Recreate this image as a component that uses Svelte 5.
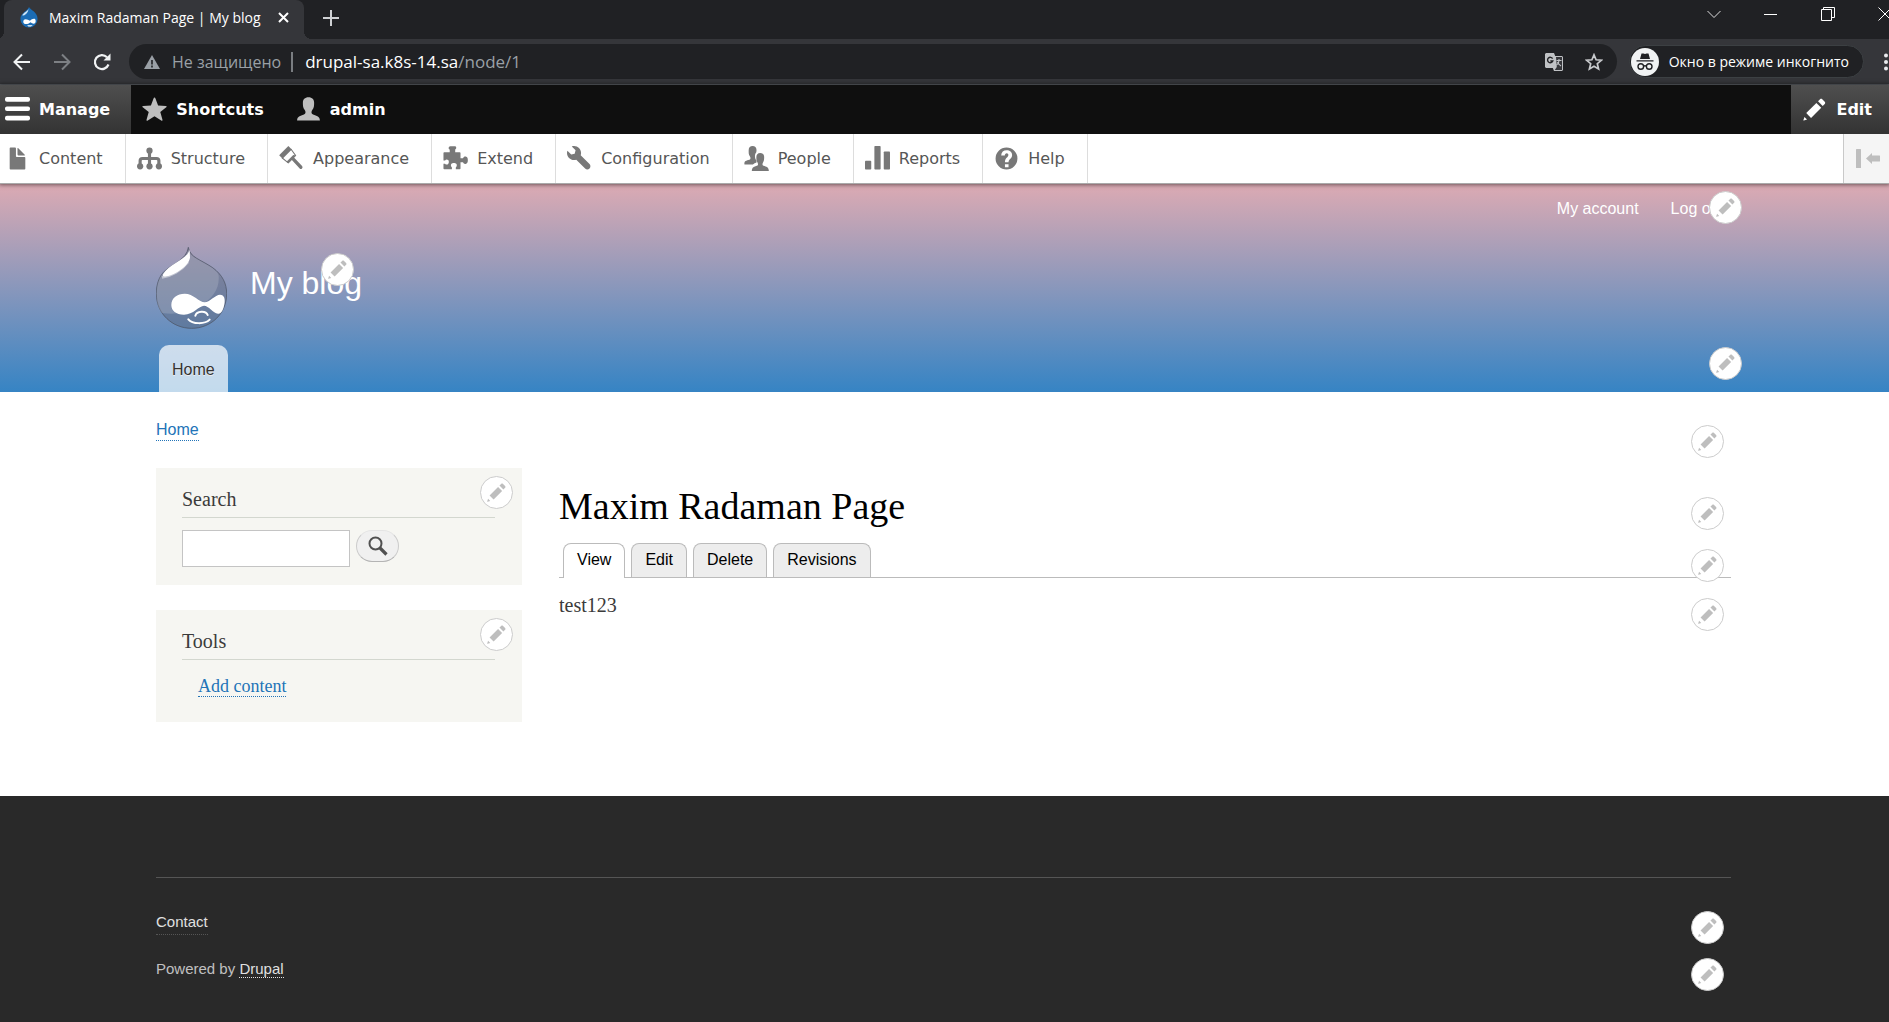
<script>
  const trayItems = [
    { label: 'Content', icon: 'file' },
    { label: 'Structure', icon: 'chart' },
    { label: 'Appearance', icon: 'brush' },
    { label: 'Extend', icon: 'puzzle' },
    { label: 'Configuration', icon: 'wrench' },
    { label: 'People', icon: 'people' },
    { label: 'Reports', icon: 'bars' },
    { label: 'Help', icon: 'help' }
  ];
  const pageTabs = ['View', 'Edit', 'Delete', 'Revisions'];
  let search = $state('');
</script>

{#snippet pencil()}
  <svg viewBox="0 0 16 16" fill="currentColor" aria-hidden="true">
    <path d="M14.545 3.042l-1.586-1.585c-.389-.389-1.025-.389-1.414 0l-1.293 1.293 3 3 1.293-1.293c.389-.389.389-1.026 0-1.415z" />
    <path d="M9.200 3.800l3.100 3.100-6.500 6.500-3.100-3.100z" />
    <path d="M.908 14.775c-.087.262.055.397.316.312l2.001-.667-1.650-1.646-.667 2.001z" />
  </svg>
{/snippet}

{#snippet contextual(place, label)}
  <button class="contextual {place}" type="button" aria-label={label}>{@render pencil()}</button>
{/snippet}

{#snippet trayIcon(name)}
  <svg viewBox="0 0 16 16" fill="currentColor" aria-hidden="true">
    {#if name === 'file'}
      <path d="M12.502 7h-5c-.276 0-.502-.225-.502-.5v-5c0-.275-.225-.5-.5-.5h-3c-.275 0-.5.225-.5.5v13.029c0 .275.225.5.5.5h9.002c.275 0 .5-.225.5-.5v-7.029c0-.275-.225-.5-.5-.5zM8.502 6h4c.275 0 .34-.159.146-.354l-4.293-4.292c-.195-.195-.353-.129-.353.146v4c-.001.275.224.5.5.5z" />
    {:else if name === 'chart'}
      <circle cx="8" cy="3" r="2" /><circle cx="2" cy="13" r="2" /><circle cx="8" cy="13" r="2" /><circle cx="14" cy="13" r="2" />
      <path d="M8 3v10M2 13V9.500Q2 8 3.500 8h9Q14 8 14 9.500V13" fill="none" stroke="currentColor" stroke-width="2" />
    {:else if name === 'brush'}
      <path d="M6 0L.1 5.900l2.200 2.200L8.200 2.200z" />
      <path d="M7.600 1.900l3 4.200-4.700 4.700-4-3.300" fill="none" stroke="currentColor" stroke-width=".7" />
      <path d="M10.900 6L6 11l-1.200-.9 4.300-4.300z" />
      <path d="M9 8.300l5 5.300" stroke="currentColor" stroke-width="2.100" stroke-linecap="round" />
    {:else if name === 'puzzle'}
      <path d="M4.300 4V2.300c-.7-.3-.9-1-.5-1.700C4 .3 4.300.2 4.700.2h2.800c1 0 1.500 1.300.3 2.100V4h2.900c.3 0 .5.200.5.500v3.300h1.600c.4-1 1.300-1.300 2.100-.9.800.4 1 1 1 2.200s-.3 1.900-1.100 2.200c-.8.400-1.600 0-2-.9h-1.600v4c0 .3-.2.500-.5.500H8.200v-1.200c.8-.7.8-1.600.3-2.300-.6-.8-2.500-.8-3.100 0-.5.700-.5 1.600.3 2.300v1.200H.8c-.3 0-.5-.2-.5-.5v-3.100h1c.6.7 1.400.7 2 .2.600-.6.600-1.900 0-2.500-.6-.5-1.400-.5-2 .2h-1V4.500c0-.3.2-.5.5-.5z" />
    {:else if name === 'wrench'}
      <path d="M14.416 11.586l-5.666-5.665c.15-.449.252-.921.252-1.421 0-2.485-2.016-4.500-4.502-4.500-.505 0-.981.102-1.434.255l2.431 2.431-.588 2.196-2.196.588-2.445-2.445c-.162.464-.268.956-.268 1.475 0 2.486 2.014 4.500 4.500 4.500.5 0 .972-.102 1.421-.251l5.667 5.665c.781.781 2.047.781 2.828 0s.781-2.047 0-2.828z" />
    {:else if name === 'people'}
      <path d="M5.500 0C7 0 8 1 8 2.600c0 .7 0 1-.2 1.500C7.200 4.800 7 5.700 7 6.500c0 1.200.4 2.100 1 2.800v1.300c-.8.300-1.700.7-2.300 1.200H.3C0 9.500 1.500 9.400 3.500 8.800c.8-.3.800-1.200.4-1.900C2.800 5.600 3 4 3 2.600 3 1 4 0 5.500 0z" />
      <path d="M10.400 4.500c1.700 0 2.500 1.200 2.500 2.600 0 1.300 0 2.600-.8 3.600-.4.800-.4 1.700.4 2 1.800.6 3.400.9 3.400 3.300H5c0-2.400 1.600-2.700 3.300-3.300.8-.3.800-1.200.4-2-.8-1-.8-2.300-.8-3.600 0-1.400.8-2.600 2.500-2.600z" />
    {:else if name === 'bars'}
      <rect x="0" y="9.500" width="4" height="5.500" rx=".5" /><rect x="6" y="0" width="4" height="15" rx=".5" /><rect x="12" y="3.500" width="4" height="11.500" rx=".5" />
    {:else}
      <path fill-rule="evenodd" d="M8 1a7 7 0 1 0 0 14A7 7 0 0 0 8 1zM7 11.600h2.300v2H7zM4.600 6C4.700 3.900 6 2.700 8.100 2.700c2 0 3.500 1.200 3.500 3 0 2.500-2.300 2.500-2.300 4.700H7c0-3 2.200-3 2.200-4.600 0-.7-.4-1.200-1.100-1.200S7 5.200 6.900 6z" />
    {/if}
  </svg>
{/snippet}

<div class="page">
  <div class="browser">
    <div class="strip">
      <div class="tab">
        <svg class="favicon" viewBox="0 0 20 22" aria-hidden="true">
          <path d="M10 0c1 3 9 5 9 12.500a9 9 0 0 1-18 0C1 6 9 4 10 0z" fill="#1b6cb4" />
          <path d="M9.500 2C8 5 4 5.500 3 9c3 0 6-3 6.500-7z" fill="#cfe6f7" />
          <path d="M4 15.500c0-4 4.500-3 7-1 2-2 6-3.500 6 .2 0 3.500-3 3.300-5.500 1.200-2.500 2.500-7.500 3-7.500-.4zM8 19h6l-2 1.500H9.500z" fill="#fff" />
        </svg>
        <span class="tab-title">Maxim Radaman Page | My blog</span>
        <button class="bare" type="button" aria-label="Close tab">
          <svg width="11" height="11" viewBox="0 0 11 11" stroke="#fff" stroke-width="2"><path d="M1 1l9 9M10 1L1 10" /></svg>
        </button>
      </div>
      <button class="bare new-tab" type="button" aria-label="New tab">
        <svg width="16" height="16" viewBox="0 0 16 16" stroke="#cfd1d4" stroke-width="2"><path d="M8 0v16M0 8h16" /></svg>
      </button>
      <div class="window-controls">
        <button class="bare" type="button" aria-label="Tab search"><svg width="14" height="14" viewBox="0 0 14 14" fill="none" stroke="#ddd"><path d="M.5 4L7 10.500 13.500 4" /></svg></button>
        <button class="bare" type="button" aria-label="Minimize"><svg width="14" height="14" viewBox="0 0 14 14" stroke="#fff"><path d="M0 7.500h13" /></svg></button>
        <button class="bare" type="button" aria-label="Restore"><svg width="14" height="14" viewBox="0 0 14 14" fill="none" stroke="#fff"><path d="M.5 2.500h10v11h-10zM2.500 2.500v-2h11v10h-3" /></svg></button>
        <button class="bare" type="button" aria-label="Close"><svg width="14" height="14" viewBox="0 0 14 14" stroke="#fff"><path d="M.5.5l13 13M13.500.5l-13 13" /></svg></button>
      </div>
    </div>
    <div class="navbar">
      <div class="nav-buttons">
        <button class="bare" type="button" aria-label="Back"><svg width="18" height="18" viewBox="0 0 18 18" fill="none" stroke="#f1f3f4" stroke-width="2"><path d="M17 9H2M9 1.500L1.500 9 9 16.500" /></svg></button>
        <button class="bare" type="button" aria-label="Forward"><svg width="18" height="18" viewBox="0 0 18 18" fill="none" stroke="#7d8084" stroke-width="2"><path d="M1 9h15M9 1.500L16.500 9 9 16.500" /></svg></button>
        <button class="bare" type="button" aria-label="Reload"><svg width="18" height="18" viewBox="0 0 18 18"><path d="M15.500 11.500A7 7 0 1 1 14 4.200" fill="none" stroke="#f1f3f4" stroke-width="2.200" /><path d="M17.500.5v7h-7z" fill="#f1f3f4" /></svg></button>
      </div>
      <div class="omnibox">
        <svg width="16" height="14" viewBox="0 0 16 14" aria-hidden="true"><path d="M8 0l8 14H0z" fill="#9aa0a6" /><path d="M8 5v4.500M8 10.500v2" stroke="#202124" stroke-width="1.600" /></svg>
        <span class="insecure">Не защищено</span>
        <span class="separator"></span>
        <span class="url">drupal-sa.k8s-14.sa<span>/node/1</span></span>
        <button class="bare" type="button" aria-label="Translate">
          <svg width="18" height="18" viewBox="0 0 18 18"><path d="M1 0h8l1.200 3H17l1 1v13l-1 1H9l-1.200-3H1l-1-1V1z" fill="#bfc1c4" /><path d="M11 4h6v13H9.800l2-3z" fill="#35363a" /><path d="M11.500 7.500h5M14 6v1.500c0 2-1 3.500-2.500 4.500M12.500 9c.5 1.500 2 3 3.500 4" fill="none" stroke="#bfc1c4" stroke-width="1.100" /><path d="M7.600 5.600A2.700 2.700 0 1 0 7.800 8H5.300" fill="none" stroke="#202124" stroke-width="1.400" /></svg>
        </button>
        <button class="bare" type="button" aria-label="Bookmark this page">
          <svg width="18" height="18" viewBox="0 0 18 18" fill="none" stroke="#c8cacd" stroke-width="1.700"><path d="M9 1.800l2.100 5 5.300.4-4.100 3.500 1.300 5.300L9 13.200 4.400 16l1.300-5.300-4.100-3.500 5.300-.4z" /></svg>
        </button>
      </div>
      <div class="incognito">
        <svg width="28" height="28" viewBox="0 0 28 28" aria-hidden="true"><circle cx="14" cy="14" r="14" fill="#f1f3f4" /><path d="M9 11l1.500-5.500h2L14 6l1.500-.5h2L19 11zM5.500 12.200h17v1.300h-17z" fill="#202124" /><g fill="none" stroke="#202124" stroke-width="1.400"><circle cx="9.800" cy="18.500" r="2.800" /><circle cx="18.200" cy="18.500" r="2.800" /><path d="M12.500 18.200q1.500-1 3 0" /></g></svg>
        <span>Окно в режиме инкогнито</span>
      </div>
      <button class="bare more" type="button" aria-label="Menu"><svg width="4" height="18" viewBox="0 0 4 18" fill="#e8eaed"><circle cx="2" cy="2.500" r="2" /><circle cx="2" cy="9" r="2" /><circle cx="2" cy="15.500" r="2" /></svg></button>
    </div>
  </div>

  <nav class="toolbar" aria-label="Administration toolbar">
    <div class="bar">
      <a class="bar-item active first" href="#manage">
        <svg viewBox="0 0 16 16" fill="#fff" aria-hidden="true"><rect width="16" height="3" rx="1.250" /><rect y="6" width="16" height="3" rx="1.250" /><rect y="12" width="16" height="3" rx="1.250" /></svg>
        Manage
      </a>
      <a class="bar-item" href="#shortcuts">
        <svg viewBox="0 0 16 16" fill="#bebebe" aria-hidden="true"><path d="M8 .3c.3 0 .5.300.6.600l1.700 4.600 4.900.2c.7 0 .8.500.3.900l-3.800 3 1.400 4.900c.1.600-.3.900-.8.500L8 12.300 3.700 15c-.5.400-.9.100-.8-.5l1.400-4.900-3.800-3c-.5-.4-.4-.9.300-.9l4.900-.2L7.400.9c.1-.3.300-.6.600-.6z" /></svg>
        Shortcuts
      </a>
      <a class="bar-item" href="#admin">
        <svg viewBox="0 0 16 16" fill="#bebebe" aria-hidden="true"><path d="M8 .2c2.400 0 3.600 1.500 3.600 3.500 0 1.900 0 3.200-1.300 4.800-.6.900-.6 2.300.6 2.700 2.400.8 4.400 1.300 4.400 3.900H.7c0-2.600 2-3.100 4.400-3.900 1.200-.4 1.200-1.800.6-2.700C4.400 6.900 4.400 5.600 4.400 3.700 4.400 1.700 5.600.2 8 .2z" /></svg>
        admin
      </a>
      <button class="bar-item active edit" type="button">{@render pencil()}Edit</button>
    </div>
    <div class="tray">
      {#each trayItems as item}
        <a class="tray-item" href="#{item.icon}">{@render trayIcon(item.icon)}{item.label}</a>
      {/each}
      <button class="orientation" type="button" aria-label="Vertical orientation">
        <svg width="24" height="20" viewBox="0 0 24 20" fill="#bebebe"><rect y="0" width="5" height="19" rx=".5" /><path d="M10 9.500L16 4v2.500h7.500q.5 0 .5.500v5q0 .5-.5.500H16V15z" /></svg>
      </button>
    </div>
  </nav>

  <header class="header">
    <nav class="account" aria-label="User account menu">
      <a href="#account">My account</a>
      <a href="#logout">Log out</a>
      {@render contextual('on-account', 'Configure account menu')}
    </nav>
    <div class="brand">
      <svg class="logo" viewBox="0 0 213 246" aria-hidden="true">
        <path d="M97 1C101 31 135 38 170 62c30 22 42 48 42 78 0 60-47 104-105 104S1 200 1 140c0-30 9-50 21-64C45 52 92 40 97 1z" fill="#4e5668" fill-opacity=".36" stroke="#4b5262" stroke-opacity=".7" stroke-width="3" />
        <path d="M97 8C101 31 135 40 170 64c12 9 17 16 18 22 3 40-18 68-58 92-40 23-80 25-112 20C4 178 2 160 2 140c0-30 9-50 21-64C45 52 92 40 97 8z" fill="#ccd0dc" fill-opacity=".25" />
        <path d="M18 91c26-3 58-20 78-46" fill="none" stroke="#fff" stroke-opacity=".45" stroke-width="8" />
        <path d="M101 8c-8 30-60 42-79 72-4 8 2 10 10 8 26-6 66-30 70-56z" fill="#fff" />
        <path d="M46 174c0-22 18-34 40-34 26 0 44 26 60 26 14 0 32-23 46-23 13 0 16 13 13 29-3 17-9 29-19 28-15-2-28-24-42-24-15 0-32 27-60 27-24 0-38-12-38-29z" fill="#fff" />
        <path d="M118 206c4-14 32-16 37-2M97 217c12 15 50 15 64 1" fill="none" stroke="#fff" stroke-width="6" stroke-linecap="round" />
      </svg>
      <a class="site-name" href="#home">My blog</a>
      {@render contextual('on-brand', 'Configure site branding')}
    </div>
    <nav class="main-menu" aria-label="Main navigation">
      <a href="#home">Home</a>
      {@render contextual('on-menu', 'Configure main navigation')}
    </nav>
  </header>

  <main class="main">
    <nav class="breadcrumb" aria-label="Breadcrumb">
      <a class="link" href="#home">Home</a>
      {@render contextual('on-row crumb', 'Configure breadcrumb')}
    </nav>
    <div class="columns">
      <aside class="sidebar">
        <section class="block search">
          <h2>Search</h2>
          {@render contextual('on-block', 'Configure search block')}
          <form onsubmit={(e) => e.preventDefault()}>
            <input type="search" aria-label="Search" bind:value={search} />
            <button type="submit" aria-label="Run search">
              <svg width="20" height="20" viewBox="0 0 20 20" fill="none" stroke="#505050" aria-hidden="true"><circle cx="7.500" cy="7.500" r="6" stroke-width="2" /><path d="M11.500 11.500l7 7" stroke-width="3.200" /></svg>
            </button>
          </form>
        </section>
        <section class="block tools">
          <h2>Tools</h2>
          {@render contextual('on-block', 'Configure tools block')}
          <a class="link" href="#add">Add content</a>
        </section>
      </aside>
      <article class="content">
        <h1>Maxim Radaman Page</h1>
        {@render contextual('on-row title', 'Configure page title')}
        <nav class="tabs" aria-label="Tabs">
          {#each pageTabs as tab, i}
            <a href="#{tab.toLowerCase()}" class:current={i === 0}>{tab}</a>
          {/each}
          {@render contextual('on-row local', 'Configure tabs')}
        </nav>
        <div class="body">
          <p>test123</p>
          {@render contextual('on-row node', 'Configure content')}
        </div>
      </article>
    </div>
  </main>

  <footer class="footer">
    <div class="footer-inner">
      <div class="footer-row">
        <a class="contact" href="#contact">Contact</a>
        {@render contextual('on-row foot', 'Configure footer menu')}
      </div>
      <div class="footer-row">
        <span>Powered by <a class="drupal" href="#drupal">Drupal</a></span>
        {@render contextual('on-row foot', 'Configure powered by block')}
      </div>
    </div>
  </footer>
</div>

<style>
  :global(body) { margin: 0; }
  .page, .page :global(*) { box-sizing: border-box; }
  .page {
    min-height: 100vh;
    display: flex;
    flex-direction: column;
    background: #fff;
    font-family: "Liberation Sans", Arial, sans-serif;
    font-size: 16px;
    line-height: 20px;
    overflow-x: hidden;
  }
  a { color: inherit; text-decoration: none; }
  h1, h2, p { margin: 0; font-weight: 400; }
  svg { display: block; flex: none; }
  button { font: inherit; cursor: pointer; }
  .bare { border: 0; padding: 0; background: none; display: flex; align-items: center; justify-content: center; }

  .browser { background: #35363a; border-bottom: 1px solid #5f6368; font-family: "Open Sans", "Noto Sans", sans-serif; }
  .strip { display: flex; height: 39px; background: #202124; overflow: hidden; }
  .tab { position: relative; display: flex; align-items: center; width: 300px; margin-left: 4px; padding: 0 15px 4px 15px; background: #35363a; border-radius: 8px 8px 0 0; color: #fff; font-size: 14px; }
  .tab::before, .tab::after { content: ""; position: absolute; bottom: 0; width: 8px; height: 8px; }
  .tab::before { right: 100%; background: radial-gradient(circle at 0 0, #202124 8px, #35363a 8px); }
  .tab::after { left: 100%; background: radial-gradient(circle at 100% 0, #202124 8px, #35363a 8px); }
  .favicon { width: 20px; height: 21px; }
  .tab-title { flex: 1; padding-left: 10px; white-space: nowrap; }
  .new-tab { margin-left: 19px; padding-bottom: 4px; }
  .window-controls { display: flex; gap: 43px; margin: 0 -3px 0 auto; padding-bottom: 11px; }
  .navbar { display: flex; align-items: center; height: 45px; padding: 0 1px 0 13px; }
  .nav-buttons { display: flex; gap: 22px; width: 116px; }
  .omnibox { flex: 1; display: flex; align-items: center; height: 35px; padding: 0 14px 0 15px; border-radius: 18px; background: #202124; font-size: 16px; white-space: nowrap; }
  .insecure { padding-left: 12px; color: #9aa0a6; }
  .separator { width: 2px; height: 20px; margin: 0 12px 0 10px; background: #7a7d81; }
  .url { flex: 1; color: #fff; font-size: 17px; }
  .url span { color: #9aa0a6; }
  .omnibox .bare + .bare { margin-left: 22px; }
  .incognito { display: flex; align-items: center; gap: 10px; height: 33px; margin-left: 12px; padding: 0 14px 0 1px; border: 1px solid #3c4043; border-radius: 17px; background: #202124; color: #fff; font-size: 14px; white-space: nowrap; }
  .more { margin-left: 20px; }

  .toolbar { position: relative; z-index: 1; font-family: "DejaVu Sans", Verdana, sans-serif; color: #fff; box-shadow: 0 0 4px 1px rgba(0, 0, 0, 0.5); }
  .bar { display: flex; height: 49px; background: #0f0f0f; }
  .bar-item { display: flex; align-items: center; gap: 9px; padding: 0 21px 0 11px; font-weight: 700; }
  .bar-item svg, .bar-item :global(svg), .tray-item svg { width: 25px; height: 25px; }
  .bar-item.active { border: 0; color: #fff; background: linear-gradient(#4f4f4f, #333); }
  .bar-item.first { padding-left: 5px; }
  .edit { margin-left: auto; padding-right: 17px; }
  .tray { display: flex; height: 50px; background: #fff; border-bottom: 1px solid #aaa; }
  .tray-item { display: flex; align-items: center; gap: 9px; padding: 0 22px 0 11px; border-right: 1px solid #ddd; color: #565656; }
  .tray-item svg { color: #787878; }
  .tray-item:first-child { padding-left: 5px; }
  .orientation { display: flex; align-items: center; margin-left: auto; padding: 0 9px 0 12px; border: 0; border-left: 1px solid #c9c9c9; background: #f5f5f5; }

  .contextual { position: absolute; display: flex; align-items: center; justify-content: center; width: 33px; height: 33px; padding: 0; border: 1px solid #ccc; border-radius: 50%; background: #fff; color: #bebebe; }
  .contextual :global(svg) { width: 21px; height: 21px; }
  .on-account { top: -8px; right: -11px; }
  .on-brand { top: 6px; left: 165px; }
  .on-menu { top: 2px; right: -11px; }
  .on-row { right: 7px; }
  .crumb { top: 5px; }
  .title { top: 29px; }
  .local { top: 6px; }
  .node { top: 20px; }
  .foot { top: -1px; }
  .on-block { top: 8px; right: 9px; }

  .header { padding: 15px 158px 0 156px; background: linear-gradient(#dcaab3, #3684c4); color: #fff; }
  .account { position: relative; display: flex; justify-content: flex-end; gap: 32px; }
  .account a:nth-of-type(2) { padding-right: 7px; }
  .brand { position: relative; display: flex; margin-top: 28px; }
  .logo { width: 71px; height: 82px; }
  .site-name { margin: 18px 0 0 23px; font-size: 32px; line-height: 36px; }
  .main-menu { position: relative; display: flex; margin-top: 16px; padding-left: 3px; }
  .main-menu a { padding: 15px 13px 12px; border-radius: 10px 10px 0 0; background: rgba(255, 255, 255, 0.7); color: #333; text-shadow: 0 1px #eee; }

  .main { padding: 28px 158px 74px 156px; }
  .link { color: #2274b8; border-bottom: 1px dotted #2274b8; }
  .breadcrumb { position: relative; display: flex; padding-bottom: 27px; }
  .columns { display: grid; grid-template-columns: 366px minmax(0, 1fr); gap: 37px; }
  .sidebar { display: flex; flex-direction: column; gap: 25px; font-family: Georgia, "Liberation Serif", serif; }
  .block { position: relative; padding: 19px 27px 18px 26px; background: #f6f6f2; color: #3b3b3b; }
  .block h2 { padding-bottom: 6px; border-bottom: 1px solid #d3d7cf; font-size: 20px; line-height: 24px; }
  .search form { display: flex; align-items: flex-start; gap: 6px; margin-top: 12px; }
  .search input { width: 168px; height: 37px; margin: 0; padding: 4px; border: 1px solid #c4c4c4; border-radius: 0; outline: 0; background: #fff; font-size: 16px; }
  .search form button { display: flex; align-items: center; justify-content: center; width: 43px; height: 32px; padding: 0; border: 1px solid #ccc; border-top-color: #e4e4e4; border-bottom-color: #b4b4b4; border-radius: 16px; background: #f0f0f0; }
  .tools { padding-bottom: 25px; }
  .tools .link { display: block; width: fit-content; margin: 16px 0 0 16px; font-size: 18px; }
  .content { position: relative; padding-top: 16px; }
  .content h1 { font-family: Georgia, "Liberation Serif", serif; font-size: 38px; line-height: 44px; color: #000; }
  .tabs { position: relative; display: flex; align-items: flex-end; gap: 6px; height: 35px; margin-top: 15px; padding-left: 4px; border-bottom: 1px solid #bbb; }
  .tabs a { height: 34px; padding: 6px 13px 0; border: 1px solid #bbb; border-bottom: 0; border-radius: 8px 8px 0 0; background: #ededed; color: #000; }
  .tabs .current { height: 35px; padding-bottom: 1px; margin-bottom: -1px; background: #fff; }
  .body { position: relative; padding-top: 15px; color: #3b3b3b; font-family: Georgia, "Liberation Serif", serif; font-size: 20px; line-height: 24px; }

  .footer { flex: 1; padding: 81px 158px 20px 156px; background: #292929; color: #c0c0c0; font-size: 15px; }
  .footer-inner { display: flex; flex-direction: column; gap: 14px; padding-top: 34px; border-top: 1px solid #555; }
  .footer-row { position: relative; display: flex; height: 33px; }
  .contact { height: 23px; color: #e0e0e0; border-bottom: 1px dotted #555; }
  .drupal { color: #e0e0e0; border-bottom: 1px dotted #e0e0e0; }
</style>
